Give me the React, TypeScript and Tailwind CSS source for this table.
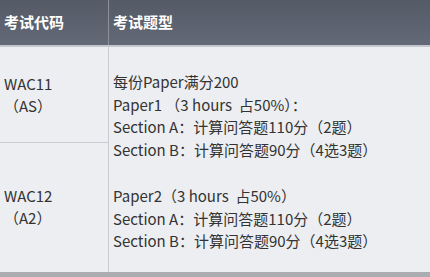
import React from "react";

const font = { fontFamily: '"Noto Sans CJK SC", "Noto Sans", sans-serif' };

export default function App() {
  return (
    <div className="w-[430px] h-[277px] overflow-hidden bg-[#eceef1] text-[#333]" style={font}>
      <div className="grid grid-cols-[108px_1px_1fr] h-[45px] bg-gradient-to-b from-[#545b67] to-[#636976]">
        <div className="flex items-center pl-[4px] text-[15px] font-bold text-white">考试代码</div>
        <div className="bg-[#8b9099]" />
        <div className="flex items-center pl-[4px] text-[15px] font-bold text-white">考试题型</div>
      </div>
      <div className="h-[2px] bg-[#c3c7cd]" />
      <div className="grid grid-cols-[108px_1px_1fr] h-[225px]">
        <div className="flex flex-col">
          <div className="h-[95px] flex flex-col justify-center pl-[4px] text-[15px] leading-[22px]">
            <div>WAC11</div>
            <div>（AS）</div>
          </div>
          <div className="h-[1px] bg-[#c8cbcf]" />
          <div className="flex-1 flex flex-col justify-center pl-[4px] text-[15px] leading-[22px] pb-[1px]">
            <div>WAC12</div>
            <div>（A2）</div>
          </div>
        </div>
        <div className="bg-[#c8cbcf]" />
        <div className="pl-[4px] pt-[24px] text-[15px] leading-[22.5px]">
          <div>每份Paper满分200</div>
          <div>Paper1 （3 hours&nbsp;&nbsp;占50%）：</div>
          <div>Section A：计算问答题110分（2题）</div>
          <div>Section B：计算问答题90分（4选3题）</div>
          <div className="h-[24px]" />
          <div>Paper2（3 hours&nbsp;&nbsp;占50%）</div>
          <div>Section A：计算问答题110分（2题）</div>
          <div>Section B：计算问答题90分（4选3题）</div>
        </div>
      </div>
      <div className="h-[5px] bg-[#abadb1]" />
    </div>
  );
}
